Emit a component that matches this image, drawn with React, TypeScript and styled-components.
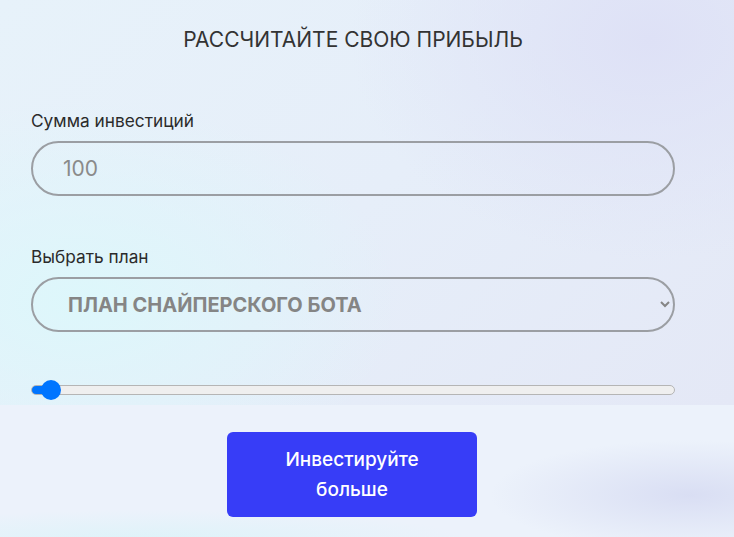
import React from "react";
import styled, { createGlobalStyle } from "styled-components";

const GlobalStyle = createGlobalStyle`
  html, body {
    margin: 0;
    padding: 0;
  }
  body {
    font-family: Inter, "Noto Sans", Arial, sans-serif;
    background: #edf2fb;
  }
`;

const plans = ["ПЛАН СНАЙПЕРСКОГО БОТА", "ПЛАН АРБИТРАЖНОГО БОТА", "ПЛАН ТОРГОВОГО БОТА"];

const App = () => {
  const [amount, setAmount] = React.useState<string>("");
  const [plan, setPlan] = React.useState<string>(plans[0]);
  const [level, setLevel] = React.useState<number>(1.5);

  return (
    <>
      <GlobalStyle />
      <Page>
        <Calculator>
          <Title>РАССЧИТАЙТЕ СВОЮ ПРИБЫЛЬ</Title>

          <Field>
            <Label htmlFor="amount">Сумма инвестиций</Label>
            <AmountInput
              id="amount"
              type="number"
              placeholder="100"
              value={amount}
              onChange={(e) => setAmount(e.target.value)}
            />
          </Field>

          <Field>
            <Label htmlFor="plan">Выбрать план</Label>
            <PlanSelect
              id="plan"
              value={plan}
              onChange={(e) => setPlan(e.target.value)}
            >
              {plans.map((p) => (
                <option key={p} value={p}>
                  {p}
                </option>
              ))}
            </PlanSelect>
          </Field>

          <Range
            type="range"
            min={0}
            max={100}
            step={0.5}
            value={level}
            onChange={(e) => setLevel(Number(e.target.value))}
            style={{
              background: `linear-gradient(to right, #0075ff 0, #0075ff calc(${level}% + 10px), #efefef calc(${level}% + 10px))`,
            }}
          />
        </Calculator>

        <Footer>
          <InvestButton>
            Инвестируйте
            <br />
            больше
          </InvestButton>
        </Footer>
      </Page>
    </>
  );
};

export default App;

const Page = styled.div`
  width: 100%;
  min-height: 537px;
  display: flex;
  flex-direction: column;
  background:
    radial-gradient(ellipse 200px 55px at 690px 495px, rgba(216, 221, 243, 0.95), rgba(216, 221, 243, 0) 100%),
    radial-gradient(ellipse 320px 30px at 150px 540px, rgba(220, 243, 249, 0.9), rgba(220, 243, 249, 0) 100%),
    #ecf2fb;
`;

const Calculator = styled.div`
  height: 405px;
  box-sizing: border-box;
  padding: 27px 59px 0 31px;
  display: flex;
  flex-direction: column;
  background:
    radial-gradient(ellipse 320px 200px at 80px 300px, rgba(221, 247, 251, 1), rgba(221, 247, 251, 0) 100%),
    radial-gradient(ellipse 300px 220px at 650px 40px, rgba(222, 225, 246, 1), rgba(222, 225, 246, 0) 100%),
    linear-gradient(135deg, #e7f2fa 0%, #e6eef9 50%, #e4e8f6 100%);
`;

const Title = styled.h2`
  margin: 0 0 57px;
  text-align: center;
  font-size: 21px;
  line-height: 26px;
  font-weight: 400;
  color: #333;
`;

const Field = styled.div`
  display: flex;
  flex-direction: column;
  gap: 10px;
  margin-bottom: 50px;

  & + & {
    margin-bottom: 53px;
  }
`;

const Label = styled.label`
  font-size: 17.3px;
  line-height: 21px;
  color: #2b2b2b;
`;

const pill = `
  box-sizing: border-box;
  width: 100%;
  height: 55px;
  border: 2px solid #9b9ea3;
  border-radius: 28px;
  background: transparent;
  font-family: Inter, "Noto Sans", Arial, sans-serif;
  outline: none;
`;

const AmountInput = styled.input`
  ${pill}
  padding: 0 30px;
  font-size: 21px;
  color: #333;

  &::placeholder {
    color: #8a8a8a;
  }
  &::-webkit-inner-spin-button,
  &::-webkit-outer-spin-button {
    -webkit-appearance: none;
    margin: 0;
  }
`;

const PlanSelect = styled.select`
  ${pill}
  padding: 0 10px 0 31px;
  font-size: 20px;
  font-weight: 700;
  color: #858585;
`;

const Range = styled.input`
  -webkit-appearance: none;
  appearance: none;
  box-sizing: border-box;
  width: 100%;
  height: 10px;
  margin: 0;
  border: 1px solid #b5b5b5;
  border-radius: 5px;
  outline: none;

  &::-webkit-slider-thumb {
    -webkit-appearance: none;
    appearance: none;
    width: 20px;
    height: 20px;
    border-radius: 50%;
    background: #0075ff;
    border: none;
    cursor: pointer;
  }
`;

const Footer = styled.div`
  display: flex;
  justify-content: center;
  padding: 27px 30px 20px 0;
`;

const InvestButton = styled.button`
  width: 250px;
  height: 85px;
  border: none;
  border-radius: 6px;
  background: #373df7;
  color: #fff;
  font-family: Inter, "Noto Sans", Arial, sans-serif;
  font-size: 19px;
  font-weight: 500;
  line-height: 30px;
  cursor: pointer;
`;
